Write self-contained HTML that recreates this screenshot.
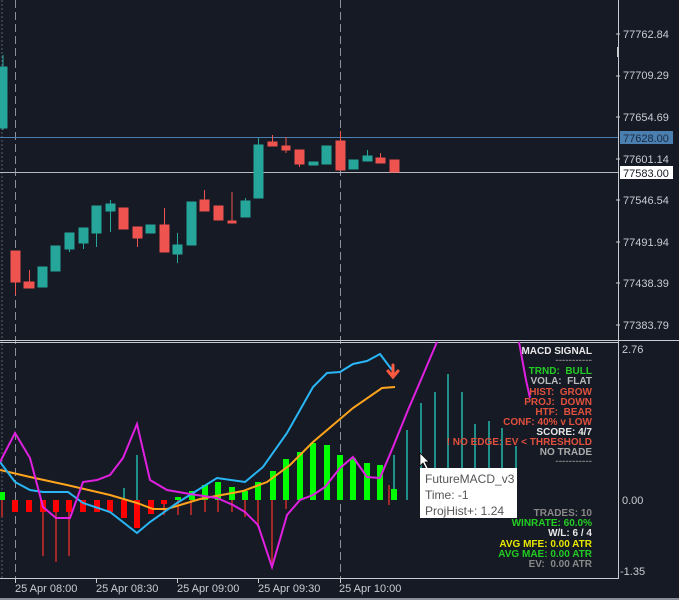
<!DOCTYPE html>
<html><head><meta charset="utf-8"><style>
html,body{margin:0;padding:0;background:#161a25;}
svg{display:block;font-family:"Liberation Sans",sans-serif;}
.pn text{white-space:pre;}
</style></head><body>
<svg width="679" height="600" viewBox="0 0 679 600" xmlns="http://www.w3.org/2000/svg">
<rect width="679" height="600" fill="#161a25"/>
<line x1="2" y1="0" x2="2" y2="578" stroke="#5a6070" stroke-dasharray="2,2"/>
<line x1="15.5" y1="0" x2="15.5" y2="578" stroke="#8a8f99" stroke-dasharray="8,4"/>
<line x1="340.5" y1="0" x2="340.5" y2="578" stroke="#8a8f99" stroke-dasharray="8,4"/>
<line x1="0" y1="137.5" x2="618" y2="137.5" stroke="#4a7fb0"/>
<line x1="0" y1="172.5" x2="618" y2="172.5" stroke="#b4b8c0"/>
<g stroke-width="1">
<g fill="#26a69a" stroke="#26a69a">
<line x1="3" y1="55" x2="3" y2="130"/><rect x="0" y="67" width="7" height="61"/>
<rect x="38" y="267" width="9" height="20"/>
<rect x="51" y="246" width="9" height="25"/>
<line x1="69.5" y1="233" x2="69.5" y2="252"/><rect x="65" y="233" width="9" height="16"/>
<line x1="83.5" y1="228" x2="83.5" y2="249"/><rect x="79" y="228" width="9" height="15"/>
<line x1="96.5" y1="206" x2="96.5" y2="247"/><rect x="92" y="206" width="9" height="27"/>
<line x1="110.5" y1="200" x2="110.5" y2="232"/><rect x="106" y="204" width="9" height="7"/>
<rect x="146" y="225" width="9" height="8"/>
<line x1="177.5" y1="233" x2="177.5" y2="263"/><rect x="173" y="245" width="9" height="9"/>
<rect x="187" y="202" width="9" height="43"/>
<line x1="245.5" y1="198" x2="245.5" y2="217"/><rect x="241" y="201" width="9" height="16"/>
<line x1="258.5" y1="138" x2="258.5" y2="198"/><rect x="254" y="145" width="9" height="53"/>
<rect x="309" y="162" width="9" height="3"/>
<rect x="322" y="146" width="9" height="18"/>
<rect x="349" y="160" width="9" height="9"/>
<line x1="367.5" y1="150" x2="367.5" y2="161"/><rect x="363" y="156" width="9" height="5"/>
</g>
<g fill="#ef5350" stroke="#ef5350">
<line x1="15.5" y1="251" x2="15.5" y2="295"/><rect x="11" y="251" width="9" height="31"/>
<line x1="29.5" y1="270" x2="29.5" y2="288"/><rect x="24" y="282" width="10" height="6"/>
<rect x="119" y="208" width="9" height="21"/>
<line x1="137.5" y1="227" x2="137.5" y2="247"/><rect x="133" y="227" width="9" height="11"/>
<line x1="164.5" y1="208" x2="164.5" y2="252"/><rect x="160" y="225" width="9" height="27"/>
<line x1="204.5" y1="190" x2="204.5" y2="211"/><rect x="200" y="200" width="9" height="11"/>
<rect x="214" y="206" width="9" height="14"/>
<line x1="232" y1="192" x2="232" y2="223"/><rect x="228" y="221" width="8" height="2"/>
<line x1="272.5" y1="135" x2="272.5" y2="146"/><rect x="268" y="142" width="9" height="4"/>
<line x1="286" y1="137" x2="286" y2="153"/><rect x="282" y="146" width="8" height="4"/>
<line x1="299.5" y1="150" x2="299.5" y2="167"/><rect x="295" y="150" width="9" height="14"/>
<line x1="340.5" y1="131" x2="340.5" y2="170"/><rect x="336" y="141" width="9" height="29"/>
<line x1="380.5" y1="153" x2="380.5" y2="163"/><rect x="376" y="158" width="9" height="5"/>
<rect x="390" y="160" width="9" height="12"/>
</g>
</g>
<line x1="618.5" y1="0" x2="618.5" y2="578" stroke="#c8ccd2"/>
<rect x="617" y="47" width="2" height="10" fill="#c8ccd2"/>
<g font-size="11" fill="#c8ccd2">
<text x="623" y="38">77762.84</text>
<text x="623" y="79">77709.29</text>
<text x="623" y="121">77654.69</text>
<text x="623" y="163">77601.14</text>
<text x="623" y="204">77546.54</text>
<text x="623" y="246">77491.94</text>
<text x="623" y="287">77438.39</text>
<text x="623" y="329">77383.79</text>
</g>
<rect x="620" y="131" width="53" height="13" fill="#4a7fb0"/>
<text x="623" y="142" font-size="11" fill="#1b2a40">77628.00</text>
<rect x="620" y="166" width="53" height="13" fill="#ffffff"/>
<text x="623" y="177" font-size="11" fill="#161a25">77583.00</text>
<g stroke="#c8ccd2"><line x1="616" y1="34" x2="620" y2="34"/><line x1="616" y1="76" x2="620" y2="76"/><line x1="616" y1="117" x2="620" y2="117"/><line x1="616" y1="159" x2="620" y2="159"/><line x1="616" y1="200" x2="620" y2="200"/><line x1="616" y1="242" x2="620" y2="242"/><line x1="616" y1="283" x2="620" y2="283"/><line x1="616" y1="325" x2="620" y2="325"/></g>
<line x1="0" y1="340.5" x2="679" y2="340.5" stroke="#c8ccd2"/>
<line x1="0" y1="342.5" x2="619" y2="342.5" stroke="#c8ccd2"/>
<g stroke="#1f8f8a" stroke-width="2">
<line x1="124" y1="488" x2="124" y2="500"/><line x1="137" y1="455" x2="137" y2="500"/>
<line x1="394" y1="455" x2="394" y2="500"/><line x1="407" y1="430" x2="407" y2="500"/>
<line x1="421" y1="403" x2="421" y2="500"/><line x1="435" y1="392" x2="435" y2="500"/>
<line x1="448" y1="374" x2="448" y2="500"/><line x1="462" y1="392" x2="462" y2="500"/>
<line x1="475" y1="424" x2="475" y2="500"/><line x1="489" y1="421" x2="489" y2="500"/>
<line x1="502" y1="428" x2="502" y2="500"/><line x1="516" y1="446" x2="516" y2="500"/>
</g>
<g stroke="#a02828" stroke-width="2">
<line x1="2" y1="500" x2="2" y2="517"/><line x1="43" y1="500" x2="43" y2="556"/>
<line x1="56" y1="500" x2="56" y2="562"/><line x1="69" y1="500" x2="69" y2="556"/>
<line x1="164" y1="500" x2="164" y2="515"/><line x1="178" y1="500" x2="178" y2="515"/>
<line x1="191" y1="500" x2="191" y2="515"/><line x1="205" y1="500" x2="205" y2="512"/>
<line x1="218" y1="500" x2="218" y2="512"/><line x1="232" y1="500" x2="232" y2="512"/>
<line x1="245" y1="500" x2="245" y2="517"/><line x1="258" y1="500" x2="258" y2="527"/>
<line x1="272" y1="500" x2="272" y2="567"/><line x1="286" y1="500" x2="286" y2="509"/>
<line x1="389" y1="485" x2="389" y2="505"/>
</g>
<g fill="#ff0000">
<rect x="12" y="500" width="6" height="12"/><rect x="26" y="500" width="6" height="12"/>
<rect x="40" y="500" width="6" height="12"/><rect x="53" y="500" width="6" height="12"/>
<rect x="66" y="500" width="6" height="12"/><rect x="80" y="500" width="6" height="12"/>
<rect x="94" y="500" width="6" height="12"/><rect x="107" y="500" width="6" height="12"/>
<rect x="121" y="500" width="6" height="18"/><rect x="134" y="500" width="6" height="28"/>
<rect x="148" y="500" width="6" height="14"/><rect x="161" y="500" width="6" height="4"/>
</g>
<g fill="#00ff00">
<rect x="0" y="492" width="5" height="8"/><rect x="175" y="497" width="6" height="3"/>
<rect x="189" y="491" width="6" height="9"/><rect x="202" y="485" width="6" height="15"/>
<rect x="215" y="482" width="6" height="18"/><rect x="229" y="487" width="6" height="13"/>
<rect x="242" y="491" width="6" height="9"/><rect x="255" y="482" width="6" height="18"/>
<rect x="270" y="471" width="6" height="29"/><rect x="283" y="459" width="6" height="41"/>
<rect x="297" y="452" width="6" height="48"/><rect x="310" y="443" width="6" height="57"/>
<rect x="324" y="445" width="6" height="55"/><rect x="337" y="455" width="6" height="45"/>
<rect x="350" y="458" width="6" height="42"/><rect x="364" y="463" width="6" height="37"/>
<rect x="377" y="465" width="6" height="35"/><rect x="391" y="489" width="6" height="11"/>
</g>
<polyline fill="none" stroke="#ffa41c" stroke-width="2" points="0,470 30,477 67,485 110,495 137,503 153,509 167,509 200,499 243,491 267,482 290,465 313,442 333,425 353,408 382,388 395,387"/>
<polyline fill="none" stroke="#29b6f6" stroke-width="2" points="0,462 15,482 30,490 43,492 68,492 83,503 110,512 137,533 150,522 177,503 217,478 245,482 263,467 287,433 313,387 327,373 340,372 353,364 367,361 380,354 392,370"/>
<polyline fill="none" stroke="#e020e0" stroke-width="2" points="0,462 15,433 30,458 43,507 56,518 70,518 83,482 97,480 110,475 123,458 137,424 150,480 167,490 190,494 217,498 233,505 245,512 258,525 272,567 287,515 300,500 313,495 325,487 340,468 353,457 367,477 380,478 393,447 408,410 420,382 437,342"/>
<polyline fill="none" stroke="#e020e0" stroke-width="2" points="519,342 526,380 530,398"/>
<path d="M393,365 L393,375 M388,371 L393,377 L398,371" fill="none" stroke="#ff5a40" stroke-width="3" stroke-linecap="round"/>
<g class="pn" font-size="10" font-weight="bold" text-anchor="end">
<text x="592" y="354" fill="#e8e8e8">MACD SIGNAL</text>
<text x="592" y="363" fill="#777">-----------</text>
<text x="592" y="374" fill="#22cc22">TRND:  BULL</text>
<text x="592" y="384" fill="#bbbbbb">VOLA:  FLAT</text>
<text x="592" y="395" fill="#e0503c">HIST:  GROW</text>
<text x="592" y="405" fill="#e0503c">PROJ:  DOWN</text>
<text x="592" y="415" fill="#e0503c">HTF:  BEAR</text>
<text x="592" y="425" fill="#e0503c">CONF: 40% v LOW</text>
<text x="592" y="435" fill="#e8e8e8">SCORE: 4/7</text>
<text x="592" y="445" fill="#e0503c">! NO EDGE: EV &lt; THRESHOLD</text>
<text x="592" y="455" fill="#aaaaaa">NO TRADE</text>
<text x="592" y="464" fill="#777">-----------</text>
<text x="592" y="516" fill="#888">TRADES: 10</text>
<text x="592" y="526" fill="#22cc22">WINRATE: 60.0%</text>
<text x="592" y="536" fill="#e8e8e8">W/L: 6 / 4</text>
<text x="592" y="547" fill="#e8e800">AVG MFE: 0.00 ATR</text>
<text x="592" y="557" fill="#22cc22">AVG MAE: 0.00 ATR</text>
<text x="592" y="567" fill="#888">EV:  0.00 ATR</text>
</g>
<path d="M420,453 L420,466 L423,463 L426,469 L428,468 L425,462 L429,462 Z" fill="#fff" stroke="#000" stroke-width="0.7"/>
<rect x="420" y="468" width="97" height="50" fill="#ffffff"/>
<g font-size="12" fill="#555">
<text x="425" y="483">FutureMACD_v3</text>
<text x="425" y="499">Time: -1</text>
<text x="425" y="515">ProjHist+: 1.24</text>
</g>
<g font-size="11" fill="#c8ccd2">
<text x="622" y="353">2.76</text>
<text x="622" y="504">0.00</text>
<text x="620" y="575">-1.35</text>
</g>
<line x1="0" y1="578.5" x2="619" y2="578.5" stroke="#c8ccd2"/>
<g stroke="#c8ccd2"><line x1="15.5" y1="578" x2="15.5" y2="583"/><line x1="96.5" y1="578" x2="96.5" y2="583"/><line x1="177.5" y1="578" x2="177.5" y2="583"/><line x1="258.5" y1="578" x2="258.5" y2="583"/><line x1="340.5" y1="578" x2="340.5" y2="583"/></g>
<g font-size="11" fill="#c8ccd2">
<text x="15" y="592">25 Apr 08:00</text>
<text x="96" y="592">25 Apr 08:30</text>
<text x="177" y="592">25 Apr 09:00</text>
<text x="258" y="592">25 Apr 09:30</text>
<text x="339" y="592">25 Apr 10:00</text>
</g>
<rect x="0" y="598" width="679" height="2" fill="#8a8f99"/>
</svg>
</body></html>
